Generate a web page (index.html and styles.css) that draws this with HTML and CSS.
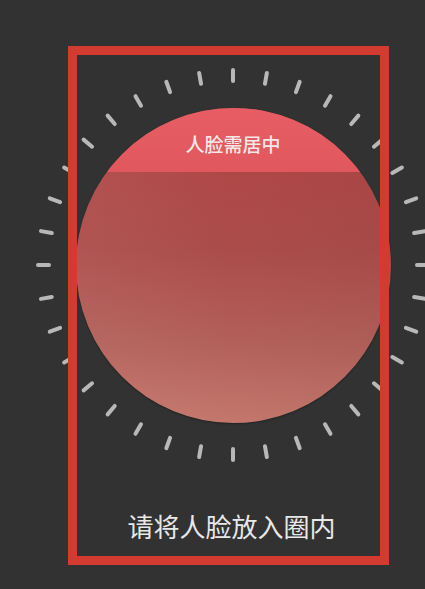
FILE: index.html
```html
<!DOCTYPE html>
<html lang="zh-CN">
<head>
<meta charset="utf-8">
<title>人脸识别</title>
<link rel="stylesheet" href="styles.css">
</head>
<body>
<div class="stage">
  <div class="dial">
    <div class="ticks">
      <span class="tick" style="--a:0deg"></span>
      <span class="tick" style="--a:10deg"></span>
      <span class="tick" style="--a:20deg"></span>
      <span class="tick" style="--a:30deg"></span>
      <span class="tick" style="--a:40deg"></span>
      <span class="tick" style="--a:50deg"></span>
      <span class="tick" style="--a:60deg"></span>
      <span class="tick" style="--a:70deg"></span>
      <span class="tick" style="--a:80deg"></span>
      <span class="tick" style="--a:90deg"></span>
      <span class="tick" style="--a:100deg"></span>
      <span class="tick" style="--a:110deg"></span>
      <span class="tick" style="--a:120deg"></span>
      <span class="tick" style="--a:130deg"></span>
      <span class="tick" style="--a:140deg"></span>
      <span class="tick" style="--a:150deg"></span>
      <span class="tick" style="--a:160deg"></span>
      <span class="tick" style="--a:170deg"></span>
      <span class="tick" style="--a:180deg"></span>
      <span class="tick" style="--a:190deg"></span>
      <span class="tick" style="--a:200deg"></span>
      <span class="tick" style="--a:210deg"></span>
      <span class="tick" style="--a:220deg"></span>
      <span class="tick" style="--a:230deg"></span>
      <span class="tick" style="--a:240deg"></span>
      <span class="tick" style="--a:250deg"></span>
      <span class="tick" style="--a:260deg"></span>
      <span class="tick" style="--a:270deg"></span>
      <span class="tick" style="--a:280deg"></span>
      <span class="tick" style="--a:290deg"></span>
      <span class="tick" style="--a:300deg"></span>
      <span class="tick" style="--a:310deg"></span>
      <span class="tick" style="--a:320deg"></span>
      <span class="tick" style="--a:330deg"></span>
      <span class="tick" style="--a:340deg"></span>
      <span class="tick" style="--a:350deg"></span>
    </div>
    <div class="face">
      <div class="face-band"><span class="face-label">人脸需居中</span></div>
      <div class="face-body"></div>
    </div>
  </div>
  <div class="frame">
    <p class="hint">请将人脸放入圈内</p>
  </div>
</div>
</body>
</html>
```
FILE: styles.css
```css
html, body {
  margin: 0;
  padding: 0;
  background: #323232;
}
body {
  width: 425px;
  height: 589px;
  overflow: hidden;
  font-family: "Noto Sans CJK SC", "Noto Sans", sans-serif;
}
.stage {
  position: relative;
  width: 425px;
  height: 589px;
  box-sizing: border-box;
  padding: 68px 0 0 36px;
}
.dial {
  position: relative;
  width: 394px;
  height: 394px;
  display: grid;
  place-items: center;
}
.ticks {
  position: absolute;
  inset: 0;
}
.tick {
  position: absolute;
  top: 0;
  left: 195px;
  width: 4px;
  height: 15px;
  border-radius: 2px;
  background: #b8b8b8;
  transform-origin: 2px 197px;
  transform: rotate(var(--a));
}
.face {
  width: 315px;
  height: 315px;
  border-radius: 50%;
  overflow: hidden;
  display: flex;
  flex-direction: column;
  background:
    linear-gradient(90deg, rgba(255,255,255,0.05) 0%, rgba(255,255,255,0) 50%, rgba(0,0,0,0.03) 100%),
    linear-gradient(180deg, #b14545 0%, #ab4c4a 45%, #b3605a 75%, #c4776c 100%);
  box-shadow: 0 1px 2px rgba(0,0,0,0.35);
}
.face-band {
  height: 64px;
  flex: none;
  box-sizing: border-box;
  padding-top: 26px;
  display: flex;
  justify-content: center;
  background: linear-gradient(180deg, #e75d63 0%, #e0585e 100%);
}
.face-label {
  font-size: 19px;
  line-height: 19px;
  font-weight: 500;
  color: #f6e8e8;
}
.face-body {
  flex: 1;
}
.frame {
  position: absolute;
  left: 68px;
  top: 46px;
  width: 321px;
  height: 519px;
  box-sizing: border-box;
  border: 9px solid #d33b30;
  display: flex;
  flex-direction: column;
  justify-content: flex-end;
  align-items: center;
  padding: 0 0 17px 6px;
}
.hint {
  margin: 0;
  font-size: 26px;
  line-height: 26px;
  color: #e8e8e8;
}
```
